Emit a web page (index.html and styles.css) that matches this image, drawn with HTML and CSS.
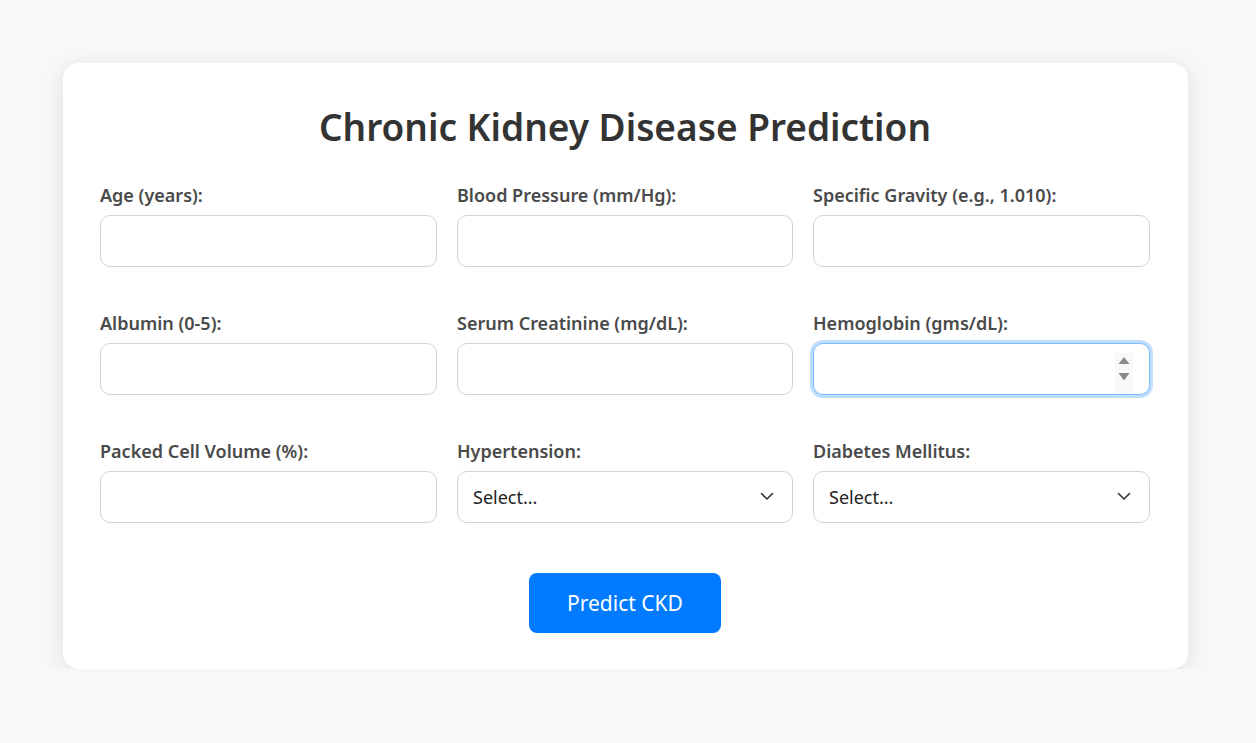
FILE: index.html
```html
<!DOCTYPE html>
<html lang="en">
<head>
<meta charset="utf-8">
<title>Chronic Kidney Disease Prediction</title>
<link rel="stylesheet" href="styles.css">
</head>
<body>
<main class="card">
  <h1 class="title">Chronic Kidney Disease Prediction</h1>
  <form class="form">
    <div class="grid">
      <div class="field">
        <label class="label" for="age">Age (years):</label>
        <input class="input" id="age" type="number">
      </div>
      <div class="field">
        <label class="label" for="bp">Blood Pressure (mm/Hg):</label>
        <input class="input" id="bp" type="number">
      </div>
      <div class="field">
        <label class="label" for="sg">Specific Gravity (e.g., 1.010):</label>
        <input class="input" id="sg" type="number">
      </div>
      <div class="field">
        <label class="label" for="al">Albumin (0-5):</label>
        <input class="input" id="al" type="number">
      </div>
      <div class="field">
        <label class="label" for="sc">Serum Creatinine (mg/dL):</label>
        <input class="input" id="sc" type="number">
      </div>
      <div class="field">
        <label class="label" for="hemo">Hemoglobin (gms/dL):</label>
        <div class="control">
          <input class="input input-focus" id="hemo" type="number">
          <span class="spinner" aria-hidden="true">
            <svg width="12" height="26" viewBox="0 0 12 26"><path d="M0.5 8 L6 1 L11.5 8 Z" fill="#8a8a8a"/><path d="M0.5 17 L11.5 17 L6 24.5 Z" fill="#8a8a8a"/></svg>
          </span>
        </div>
      </div>
      <div class="field">
        <label class="label" for="pcv">Packed Cell Volume (%):</label>
        <input class="input" id="pcv" type="number">
      </div>
      <div class="field">
        <label class="label" for="htn">Hypertension:</label>
        <div class="control">
          <select class="input select" id="htn">
            <option>Select...</option>
            <option>Yes</option>
            <option>No</option>
          </select>
          <svg class="chevron" width="14" height="9" viewBox="0 0 14 9" aria-hidden="true"><path d="M1.5 1.5 L7 7 L12.5 1.5" fill="none" stroke="#333" stroke-width="1.6" stroke-linecap="round" stroke-linejoin="round"/></svg>
        </div>
      </div>
      <div class="field">
        <label class="label" for="dm">Diabetes Mellitus:</label>
        <div class="control">
          <select class="input select" id="dm">
            <option>Select...</option>
            <option>Yes</option>
            <option>No</option>
          </select>
          <svg class="chevron" width="14" height="9" viewBox="0 0 14 9" aria-hidden="true"><path d="M1.5 1.5 L7 7 L12.5 1.5" fill="none" stroke="#333" stroke-width="1.6" stroke-linecap="round" stroke-linejoin="round"/></svg>
        </div>
      </div>
    </div>
    <div class="actions">
      <button class="button" type="button">Predict CKD</button>
    </div>
  </form>
</main>
</body>
</html>
```
FILE: styles.css
```css
html, body {
  margin: 0;
  padding: 0;
}
body {
  background: #f7f8fa;
  font-family: "Noto Sans", "Open Sans", "Liberation Sans", sans-serif;
  color: #333;
  padding: 63px 0 0 63px;
}
.card {
  box-sizing: border-box;
  width: 1125px;
  height: 606px;
  background: #fff;
  border-radius: 16px;
  box-shadow: 0 4px 24px rgba(0, 0, 0, 0.1);
  padding: 36px 38px 36px 37px;
}
.title {
  margin: 0 0 28px;
  text-align: center;
  font-size: 37px;
  font-weight: 600;
  line-height: 56px;
  color: #333;
}
.grid {
  display: grid;
  grid-template-columns: 337px 336px 337px;
  column-gap: 20px;
  row-gap: 44px;
}
.field {
  display: flex;
  flex-direction: column;
}
.label {
  font-size: 18px;
  font-weight: 600;
  color: #4a4a4a;
  line-height: 24px;
  margin-bottom: 8px;
}
.control {
  position: relative;
}
.input {
  box-sizing: border-box;
  width: 100%;
  height: 52px;
  border: 1px solid #ced4da;
  border-radius: 10px;
  background: #fff;
  font-family: inherit;
  font-size: 18px;
  color: #222;
  padding: 0 15px;
  margin: 0;
  outline: none;
  -moz-appearance: textfield;
}
.input::-webkit-outer-spin-button,
.input::-webkit-inner-spin-button {
  -webkit-appearance: none;
  margin: 0;
}
.input-focus {
  border-color: #80bdff;
  box-shadow: 0 0 0 3px rgba(0, 123, 255, 0.25);
}
.spinner {
  position: absolute;
  right: 17px;
  top: 10px;
  width: 18px;
  height: 40px;
  box-sizing: border-box;
  padding-top: 3px;
  background: #f9f9f9;
  display: flex;
  align-items: flex-start;
  justify-content: center;
}
.select {
  -webkit-appearance: none;
  appearance: none;
  color: #222;
}
.chevron {
  position: absolute;
  right: 19px;
  top: 21px;
  pointer-events: none;
}
.actions {
  display: flex;
  justify-content: center;
  margin-top: 50px;
}
.button {
  width: 192px;
  height: 60px;
  border: none;
  border-radius: 8px;
  background: #007bff;
  color: #fff;
  font-family: inherit;
  font-size: 21px;
  cursor: pointer;
}
```
